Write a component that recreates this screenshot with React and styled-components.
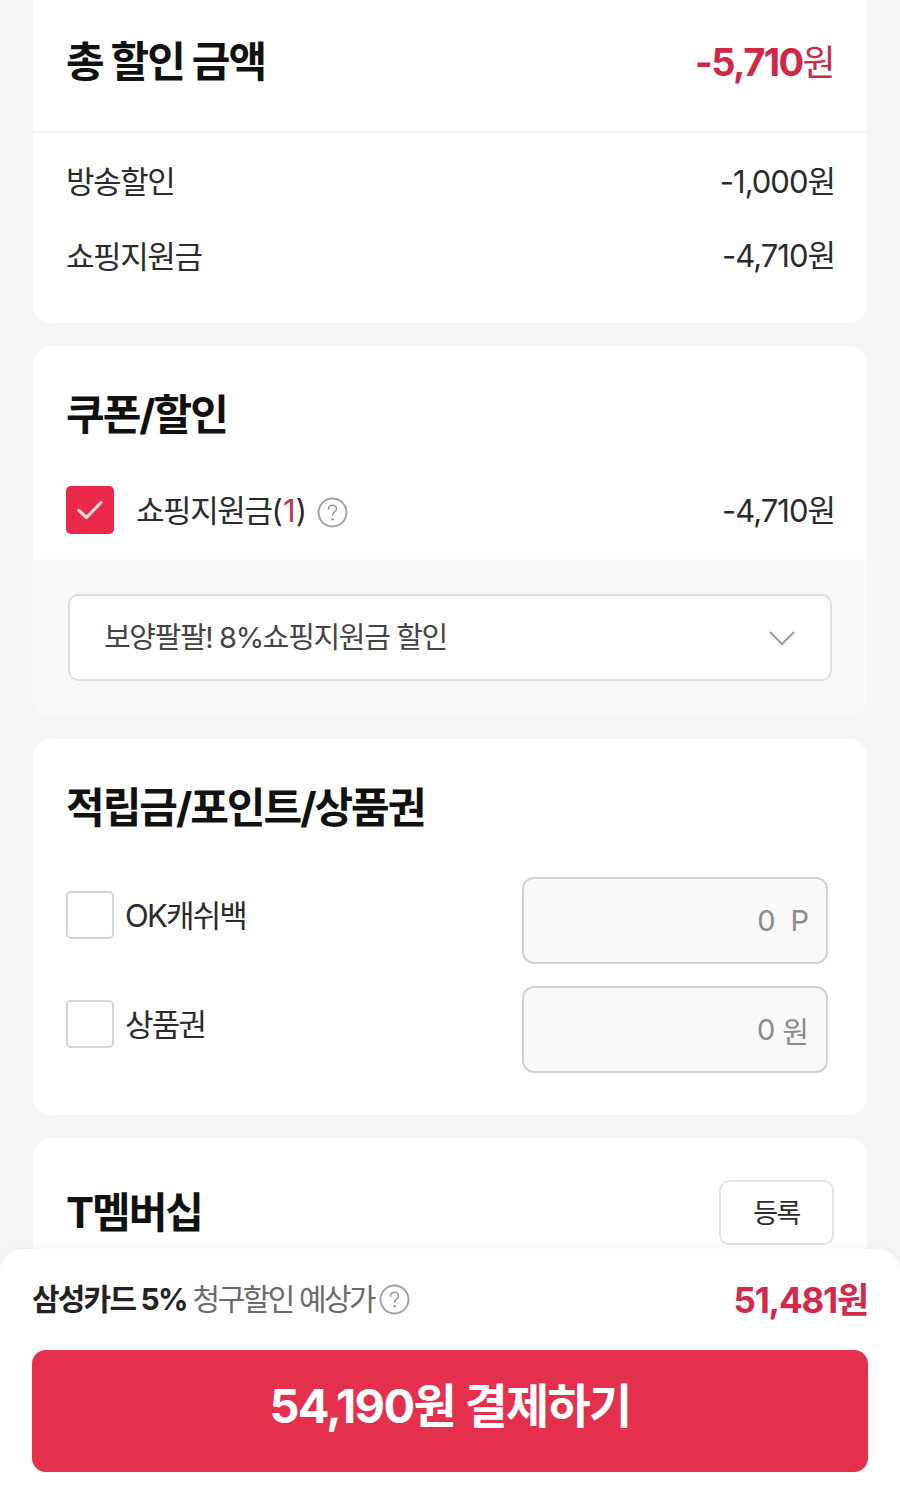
import React from 'react'
import styled, { createGlobalStyle } from 'styled-components'

const Global = createGlobalStyle`
    html, body { margin: 0; padding: 0; }
    body { background: #f5f5f5; font-family: "Inter", "Noto Sans CJK KR", sans-serif; }
    * { box-sizing: border-box; }
`
const Page = styled.div`
    position: relative;
    width: 900px;
    height: 1491px;
    overflow: hidden;
    background: #f5f5f5;
    padding: 0 33px;
    display: flex;
    flex-direction: column;
    gap: 23px;
`
const Card = styled.section`
    background: #fff;
    border-radius: ${(p) => (p.$flatTop ? '0 0 18px 18px' : '18px')};
    overflow: hidden;
    flex-shrink: 0;
`
const TotalHeader = styled.div`
    height: 133px;
    padding: 0 33px 8px;
    display: flex;
    align-items: center;
    justify-content: space-between;
    border-bottom: 2px solid #f3f3f3;
`
const Title = styled.h2`
    margin: 0;
    font-size: 42px;
    line-height: 56px;
    font-weight: 700;
    letter-spacing: -2px;
    color: #111;
`
const TotalAmount = styled.span`
    margin-bottom: 3px;
    font-size: 38px;
    font-weight: 700;
    letter-spacing: -1.6px;
    color: #cf2745;
    small { font-size: 36px; font-weight: 400; }
`
const Rows = styled.div`
    padding: 9px 33px 31px;
    display: flex;
    flex-direction: column;
`
const Row = styled.div`
    height: 75px;
    display: flex;
    align-items: center;
    justify-content: space-between;
    font-size: 31px;
    letter-spacing: -1.4px;
    color: #2b2b2b;
`
const Amount = styled.span`
    margin: 0 -1px ${(p) => p.$lift || 0}px 0;
    letter-spacing: -1px;
`
const SectionHead = styled.div`
    padding: 41px 33px 1px;
`
const CouponRow = styled(Row)`
    height: 115px;
    padding: 17px 33px 0;
`
const CheckLabel = styled.div`
    display: flex;
    align-items: center;
`
const CheckBox = styled.div`
    width: 48px;
    height: 48px;
    border-radius: 5px;
    display: flex;
    align-items: center;
    justify-content: center;
    flex-shrink: 0;
    background: ${(p) => (p.$on ? '#e9284a' : '#fff')};
    border: ${(p) => (p.$on ? 'none' : '2px solid #d4d4d4')};
`
const CouponText = styled.span`
    margin: 0 0 3px 22px;
    b { font-weight: 400; color: #c5304f; padding: 0 1.5px; }
`
const HelpWrap = styled.span`
    display: inline-flex;
    margin-left: ${(p) => p.$gap}px;
    margin-top: ${(p) => p.$drop}px;
`
const SelectArea = styled.div`
    background: #f9f9f9;
    padding: 35px;
`
const Select = styled.div`
    height: 87px;
    background: #fff;
    border: 2px solid #dfdfdf;
    border-radius: 10px;
    padding: 0 34px;
    display: flex;
    align-items: center;
    justify-content: space-between;
    font-size: 29px;
    letter-spacing: -1.35px;
    color: #444;
`
const SelectText = styled.span`
    margin-bottom: 6px;
`
const PointList = styled.div`
    padding: 40px 39px 42px 33px;
    display: flex;
    flex-direction: column;
    gap: 22px;
`
const PointRow = styled.div`
    display: flex;
    align-items: center;
    justify-content: space-between;
`
const PointCheck = styled(CheckLabel)`
    margin-top: -11px;
`
const PointLabel = styled.span`
    margin: 0 0 3px 11px;
    font-size: 31px;
    letter-spacing: -1.8px;
    color: #2b2b2b;
`
const PointInput = styled.div`
    width: 306px;
    height: 87px;
    background: #f9f9f9;
    border: 2px solid #d2d2d2;
    border-radius: 12px;
    padding: 0 17px 0 0;
    display: flex;
    align-items: center;
    justify-content: flex-end;
    gap: ${(p) => p.$gap}px;
    font-size: 29px;
    color: #8a8a8a;
`
const MemberHead = styled.div`
    padding: 42px 33px 0;
    height: 130px;
    display: flex;
    align-items: flex-start;
    justify-content: space-between;
`
const MemberTitle = styled(Title)`
    margin-top: 5px;
`
const RegisterButton = styled.button`
    width: 115px;
    height: 65px;
    padding: 0 0 3px;
    background: #fff;
    border: 2px solid #e4e4e4;
    border-radius: 10px;
    font-family: inherit;
    font-size: 27px;
    letter-spacing: -1.5px;
    color: #2b2b2b;
`
const BottomBar = styled.div`
    position: absolute;
    left: 0;
    right: 0;
    bottom: 0;
    height: 242px;
    background: #fff;
    border-radius: 22px 22px 0 0;
    padding: 0 32px;
    box-shadow: 0 -4px 10px rgba(0, 0, 0, 0.03);
`
const CardInfo = styled.div`
    height: 101px;
    display: flex;
    align-items: center;
    justify-content: space-between;
`
const CardLabel = styled.div`
    display: flex;
    align-items: center;
    font-size: 30px;
    color: #6b6b6b;
    letter-spacing: -2.5px;
`
const CardName = styled.b`
    margin: 0 6px 6px 0;
    font-weight: 700;
    letter-spacing: -1.8px;
    color: #222;
`
const CardNote = styled.span`
    margin-bottom: 6px;
`
const CardPrice = styled.span`
    margin-bottom: 4px;
    font-size: 35px;
    font-weight: 700;
    letter-spacing: -1.2px;
    color: #d4294a;
`
const PayButton = styled.button`
    width: 100%;
    height: 122px;
    padding: 0 0 18px;
    border: none;
    border-radius: 14px;
    background: #e4304c;
    color: #fff;
    font-family: inherit;
    font-size: 47px;
    font-weight: 700;
    letter-spacing: -1.7px;
`

const Help = ({ gap, drop = 0 }) => (
    <HelpWrap $gap={gap} $drop={drop}>
        <svg width="31" height="31" viewBox="0 0 31 31" fill="none">
            <circle cx="15.5" cy="15.5" r="14" stroke="#a3a3a3" strokeWidth="2" />
            <path d="M11.5 12.2c0-2.4 1.8-3.9 4-3.9s4 1.5 4 3.6c0 3-3.9 3.1-3.9 6.2" stroke="#9a9a9a" strokeWidth="1.6" strokeLinecap="round" />
            <circle cx="15.6" cy="22.3" r="1.2" fill="#9a9a9a" />
        </svg>
    </HelpWrap>
)

const App = () => (
    <Page>
        <Global />
        <Card $flatTop>
            <TotalHeader>
                <Title>총 할인 금액</Title>
                <TotalAmount>-5,710<small>원</small></TotalAmount>
            </TotalHeader>
            <Rows>
                <Row><span>방송할인</span><Amount>-1,000원</Amount></Row>
                <Row><span>쇼핑지원금</span><Amount $lift={2}>-4,710원</Amount></Row>
            </Rows>
        </Card>

        <Card>
            <SectionHead><Title>쿠폰/할인</Title></SectionHead>
            <CouponRow>
                <CheckLabel>
                    <CheckBox $on>
                        <svg width="28" height="22" viewBox="0 0 28 22" fill="none">
                            <path d="M3 11.5l7.5 7L25 3.5" stroke="#fbd5dc" strokeWidth="3.2" strokeLinecap="round" strokeLinejoin="round" />
                        </svg>
                    </CheckBox>
                    <CouponText>쇼핑지원금(<b>1</b>)</CouponText>
                    <Help gap={11} drop={5} />
                </CheckLabel>
                <Amount $lift={3}>-4,710원</Amount>
            </CouponRow>
            <SelectArea>
                <Select>
                    <SelectText>보양팔팔! 8%쇼핑지원금 할인</SelectText>
                    <svg width="28" height="16" viewBox="0 0 28 16" fill="none">
                        <path d="M2 2l12 12L26 2" stroke="#9c9c9c" strokeWidth="2" />
                    </svg>
                </Select>
            </SelectArea>
        </Card>

        <Card>
            <SectionHead><Title>적립금/포인트/상품권</Title></SectionHead>
            <PointList>
                <PointRow>
                    <PointCheck>
                        <CheckBox />
                        <PointLabel>OK캐쉬백</PointLabel>
                    </PointCheck>
                    <PointInput $gap={15}><span>0</span><span>P</span></PointInput>
                </PointRow>
                <PointRow>
                    <PointCheck>
                        <CheckBox />
                        <PointLabel>상품권</PointLabel>
                    </PointCheck>
                    <PointInput $gap={7}><span>0</span><span>원</span></PointInput>
                </PointRow>
            </PointList>
        </Card>

        <Card>
            <MemberHead>
                <MemberTitle>T멤버십</MemberTitle>
                <RegisterButton>등록</RegisterButton>
            </MemberHead>
        </Card>

        <BottomBar>
            <CardInfo>
                <CardLabel>
                    <CardName>삼성카드 5%</CardName>
                    <CardNote>청구할인 예상가</CardNote>
                    <Help gap={5} />
                </CardLabel>
                <CardPrice>51,481원</CardPrice>
            </CardInfo>
            <PayButton>54,190원 결제하기</PayButton>
        </BottomBar>
    </Page>
)

export default App
